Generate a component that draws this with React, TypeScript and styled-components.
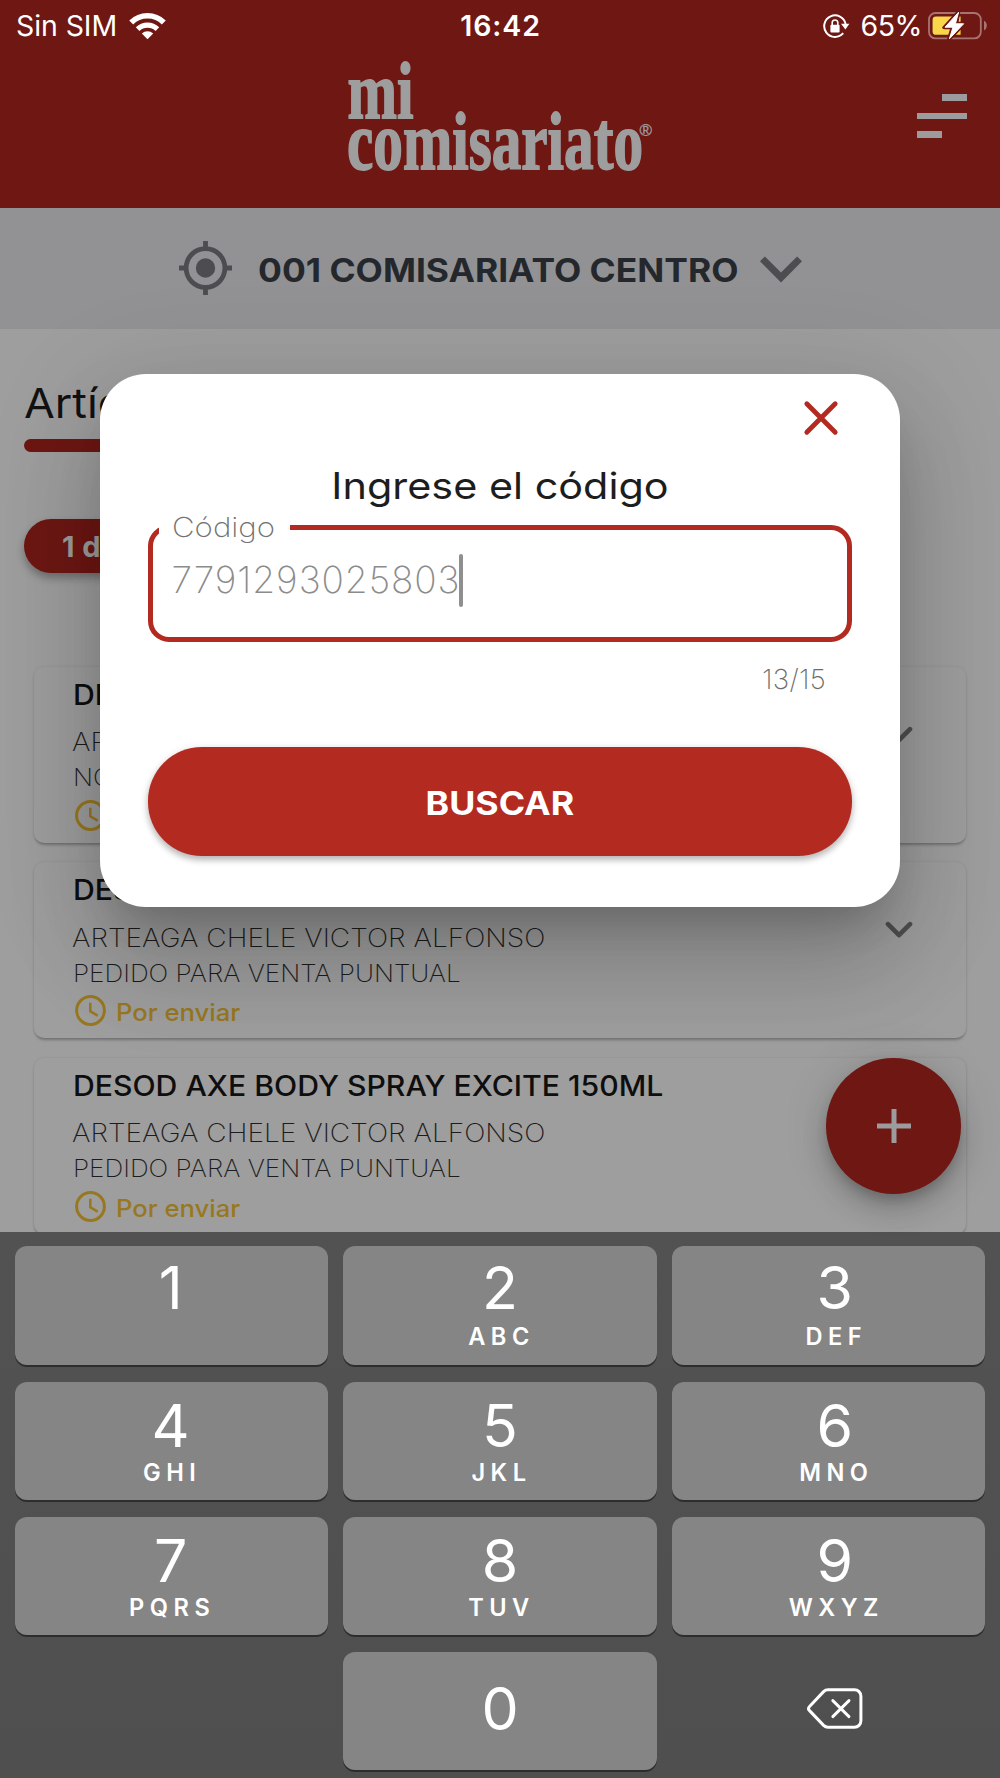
import React from "react";
import styled, { createGlobalStyle, css } from "styled-components";

const color = {
  red: "#b32a21",
  redDim: "#6e1713",
  dimWhite: "#9e9e9e",
  band: "#929294",
  key: "#858585",
};

/* Widens a line of text to the proportions of an extended geometric sans. */
const extended = (ratio: number, origin = "left") => css`
  transform: scaleX(${ratio});
  transform-origin: ${origin} center;
`;

const GlobalStyle = createGlobalStyle`
  *, *::before, *::after { box-sizing: border-box; }
  body {
    margin: 0;
    font-family: Inter, "Liberation Sans", sans-serif;
    -webkit-font-smoothing: antialiased;
  }
`;

const Screen = styled.div`
  position: relative;
  width: 1000px;
  height: 1778px;
  overflow: hidden;
  display: flex;
  flex-direction: column;
  background: ${color.dimWhite};
`;

/* ---------- header ---------- */

const Header = styled.header`
  height: 207.5px;
  flex: none;
  display: flex;
  flex-direction: column;
  background: ${color.redDim};
`;

const StatusBar = styled.div`
  height: 50px;
  padding: 0 12px 0 16px;
  display: grid;
  grid-template-columns: 1fr auto 1fr;
  align-items: center;
  color: #fff;
  font-size: 28.5px;
  line-height: 51px;
`;

const StatusGroup = styled.div<{ $end?: boolean }>`
  display: flex;
  align-items: center;
  justify-content: ${(p) => (p.$end ? "flex-end" : "flex-start")};
`;

const Carrier = styled.span`
  letter-spacing: -0.1px;
  margin-right: 12px;
`;

const Time = styled.span`
  margin-right: 3px;
  font-weight: 600;
  letter-spacing: 0.9px;
`;

const Percent = styled.span`
  letter-spacing: -0.5px;
  margin: 0 6px 0 11px;
`;

const Brand = styled.div`
  flex: 1;
  padding: 0 33px 0 342px;
  display: flex;
  justify-content: space-between;
  align-items: flex-start;
`;

const LogoArt = styled.svg`
  display: block;
  overflow: visible;
`;

const MenuIcon = styled.div`
  width: 50px;
  margin-top: 44px;
  display: flex;
  flex-direction: column;
  gap: 12px;
`;

const MenuBar = styled.span<{ $w: number; $right?: boolean }>`
  width: ${(p) => p.$w}px;
  height: 6.6px;
  align-self: ${(p) => (p.$right ? "flex-end" : "flex-start")};
  background: #9c9c9e;
`;

/* ---------- store selector ---------- */

const StoreBand = styled.div`
  height: 121.5px;
  flex: none;
  padding: 0 198px 0 179px;
  display: flex;
  align-items: center;
  background: ${color.band};
`;

const StoreName = styled.span`
  flex: 1;
  margin: 3px 0 0 26px;
  font-size: 32.6px;
  font-weight: 700;
  line-height: 40px;
  white-space: nowrap;
  color: #24282c;
  ${extended(1.087)}
`;

const StoreChevronSlot = styled.div`
  display: flex;
  padding-top: 2px;
`;

/* ---------- dimmed page ---------- */

const Page = styled.main`
  flex: 1;
  min-height: 0;
  overflow: hidden;
  padding: 49px 34px 0 24px;
  display: flex;
  flex-direction: column;

  > * {
    flex: none;
  }
`;

const PageTitle = styled.h1`
  margin: 0;
  width: max-content;
  font-size: 41px;
  font-weight: 430;
  line-height: 51px;
  color: #121212;
  ${extended(1.09)}
`;

const TitleRule = styled.div`
  width: 230px;
  height: 12.5px;
  margin-top: 10.3px;
  border-radius: 7px;
  background: ${color.redDim};
`;

const CountPill = styled.div`
  width: 190px;
  height: 53.5px;
  margin-top: 67.4px;
  padding-left: 38px;
  border-radius: 27px;
  background: ${color.redDim};
  box-shadow: 0 5px 8px rgba(0, 0, 0, 0.3);
  color: ${color.dimWhite};
  font-size: 29px;
  font-weight: 700;
  letter-spacing: 0.4px;
  line-height: 56px;
`;

const List = styled.div`
  margin: 94px 0 0 10px;
  display: flex;
  flex-direction: column;
  gap: 19.6px;
`;

const Card = styled.article`
  height: 176px;
  flex: none;
  padding: 10px 53px 0 40px;
  display: flex;
  justify-content: space-between;
  border-radius: 10px;
  box-shadow: 0 3px 3px -1px rgba(0, 0, 0, 0.26), 0 0 3px rgba(0, 0, 0, 0.1);
`;

const CardText = styled.div`
  display: flex;
  flex-direction: column;
  white-space: nowrap;
`;

const CardTitle = styled.h2`
  margin: 0 0 9.5px -1.5px;
  font-size: 28px;
  font-weight: 470;
  line-height: 37px;
  color: #0e0e0e;
  ${extended(1.078)}
`;

const CardLine = styled.p<{ $small?: boolean }>`
  margin: 0 0 0 ${(p) => (p.$small ? -1 : -1.6)}px;
  font-size: ${(p) => (p.$small ? 24 : 26)}px;
  font-weight: 230;
  line-height: ${(p) => (p.$small ? 35.2 : 37)}px;
  color: #1c1c1c;
  ${(p) => extended(p.$small ? 1.088 : 1.08)}
`;

const Pending = styled.div`
  height: 40px;
  padding-left: 1px;
  display: flex;
  align-items: center;
  gap: 9.6px;
  color: #98781f;
  font-size: 24px;
  font-weight: 480;
`;

const PendingLabel = styled.span`
  padding-top: 3px;
  ${extended(1.067)}
`;

const ChevronSlot = styled.div`
  padding-top: 47px;
`;

const Fab = styled.div`
  position: absolute;
  left: 826px;
  top: 1058px;
  width: 135px;
  height: 135.5px;
  border-radius: 50%;
  display: flex;
  align-items: center;
  justify-content: center;
  background: ${color.redDim};
  box-shadow: 0 8px 13px -3px rgba(0, 0, 0, 0.2), 0 16px 27px 0 rgba(0, 0, 0, 0.14),
    0 3px 48px 0 rgba(0, 0, 0, 0.12);
`;

/* ---------- dialog ---------- */

const Dialog = styled.section`
  position: absolute;
  left: 100px;
  top: 373.5px;
  width: 800px;
  height: 533px;
  padding: 0 48px;
  display: flex;
  flex-direction: column;
  border-radius: 46px;
  background: #fff;
  box-shadow: 0 29px 40px -19px rgba(0, 0, 0, 0.2), 0 60px 92px 6px rgba(0, 0, 0, 0.13),
    0 22px 110px 16px rgba(0, 0, 0, 0.11);
`;

const CloseRow = styled.div`
  padding: 26.5px 12.7px 0 0;
  display: flex;
  justify-content: flex-end;
`;

const DialogTitle = styled.h2`
  margin: 25px 0 0;
  font-size: 37px;
  font-weight: 430;
  line-height: 50px;
  text-align: center;
  color: #1d1d1d;
  ${extended(1.118, "center")}
`;

const Field = styled.fieldset`
  height: 131px;
  min-width: 0;
  margin: 0;
  padding: 0 0 0 18px;
  border: 5.4px solid ${color.red};
  border-radius: 21px;
`;

const Legend = styled.legend`
  height: 32px;
  margin-left: -12px;
  width: 131px;
  padding: 0 0 0 13px;
  font-size: 27.6px;
  font-weight: 250;
  line-height: 33px;
  color: #727272;
`;

const LegendText = styled.span`
  display: inline-block;
  ${extended(1.13)}
`;

const Value = styled.div`
  display: flex;
  align-items: center;
  height: 54px;
  margin-top: 10px;
  padding-left: 0.6px;
  font-size: 37px;
  font-weight: 190;
  letter-spacing: 0.95px;
  line-height: 48px;
  color: #8c8c8c;
`;

const Caret = styled.span`
  width: 4.6px;
  height: 53px;
  margin-left: -2px;
  border-radius: 2px;
  background: #8f8f8f;
`;

const Counter = styled.div`
  margin-top: 16.5px;
  padding-right: 26px;
  font-size: 27.6px;
  font-weight: 250;
  letter-spacing: 0.3px;
  line-height: 40px;
  text-align: right;
  color: #6d6d6d;
`;

const SearchButton = styled.button`
  height: 109px;
  flex: none;
  margin: 48px 0 0;
  padding: 3px 0 0;
  border: 0;
  border-radius: 54px;
  background: ${color.red};
  box-shadow: 0 4px 6px rgba(0, 0, 0, 0.22), 0 2px 10px rgba(0, 0, 0, 0.12);
  color: #fff;
  font-family: inherit;
  font-size: 32.6px;
  font-weight: 700;
`;

const SearchLabel = styled.span`
  display: inline-block;
  ${extended(1.095, "center")}
`;

/* ---------- keyboard ---------- */

const Keyboard = styled.div`
  height: 546.3px;
  flex: none;
  padding: 14.5px 15px 0;
  display: grid;
  grid-template-columns: repeat(3, 1fr);
  grid-auto-rows: 118.3px;
  gap: 17px 15px;
  align-content: start;
  background: linear-gradient(#525252, #4f4f4f);
`;

const Key = styled.div<{ $plain?: boolean; $center?: boolean; $shift?: number }>`
  display: flex;
  flex-direction: column;
  align-items: center;
  justify-content: ${(p) => (p.$center ? "center" : "flex-start")};
  padding: ${(p) => (p.$center ? 0 : 7)}px 0 ${(p) => (p.$center ? 5 : 0)}px;
  text-indent: 0;
  border-left: ${(p) => Math.max(p.$shift ?? 0, 0)}px solid transparent;
  border-right: ${(p) => Math.max(-(p.$shift ?? 0), 0)}px solid transparent;
  border-radius: 12px;
  background: ${(p) => (p.$plain ? "transparent" : color.key)};
  box-shadow: ${(p) => (p.$plain ? "none" : "0 2px 0 #2d2d2d")};
  color: #fff;
`;

const Digit = styled.span<{ $drop?: number }>`
  padding-top: ${(p) => p.$drop ?? 0}px;
  font-size: 59px;
  font-weight: 380;
  line-height: ${(p) => 70 - (p.$drop ?? 0)}px;
`;

const Letters = styled.span`
  padding-left: 3px;
  font-size: 23.6px;
  font-weight: 600;
  letter-spacing: 5.5px;
  line-height: 28px;
`;

/* ---------- drawings ---------- */

const Wifi = () => (
  <svg width="37" height="28" viewBox="0 0 37 28" fill="none">
    <path d="M2.2 10.4a23.2 23.2 0 0 1 32.6 0" stroke="#fff" strokeWidth="5.6" />
    <path d="M8.6 17.2a14.2 14.2 0 0 1 19.8 0" stroke="#fff" strokeWidth="5.2" />
    <path d="M12.8 21.4a8.4 8.4 0 0 1 11.4 0L18.5 27.2z" fill="#fff" />
  </svg>
);

const RotationLock = () => (
  <svg width="27" height="26" viewBox="0 0 27 26" fill="none">
    <path d="M20.2 20.2A10.8 10.8 0 1 1 22.6 11" stroke="#fff" strokeWidth="2" />
    <path d="M18 10.8h8.4l-4 5.6z" fill="#fff" />
    <rect x="7.4" y="11.8" width="9.2" height="7.6" rx="1" fill="#fff" />
    <path d="M9.2 12V9.8a2.8 2.8 0 0 1 5.6 0V12" stroke="#fff" strokeWidth="1.6" />
  </svg>
);

const Battery = () => (
  <svg width="60" height="30" viewBox="0 0 60 30" fill="none">
    <rect x="1" y="2" width="51.8" height="25.4" rx="6.5" stroke="#a87472" strokeWidth="1.8" />
    <path d="M56 9.8v9.6c3.8-1.6 3.8-8 0-9.6z" fill="#a87472" />
    <path d="M8 5.6h24.6v18.2H8a3.4 3.4 0 0 1-3.4-3.4V9A3.4 3.4 0 0 1 8 5.6z" fill="#f8d84a" />
    <path
      d="M30.6 0.6 16 16.6h8.2L20.6 28.8 36.6 12.4h-8z"
      fill={color.redDim}
      stroke={color.redDim}
      strokeWidth="3.4"
      strokeLinejoin="round"
    />
    <path d="M30.6 1.2 17 16.2h8L21.4 27.8 35.6 12.8h-8.2z" fill="#fff" stroke="#fff" strokeLinejoin="round" />
  </svg>
);

const Logo = () => (
  <LogoArt
    width="320"
    height="130"
    viewBox="342 50 320 130"
    fill="#9e9e9e"
    fontFamily='"Liberation Serif", serif'
    fontWeight="700"
    stroke="#9e9e9e"
    strokeWidth="1.8"
  >
    <text x="347.5" y="117.5" fontSize="80" textLength="66" lengthAdjust="spacingAndGlyphs">
      mi
    </text>
    <text x="347" y="169" fontSize="82" textLength="296" lengthAdjust="spacingAndGlyphs">
      comisariato
    </text>
    <text
      x="639.4"
      y="136.4"
      fontSize="17"
      fontFamily='"Liberation Sans", sans-serif'
      fontWeight="400"
      strokeWidth="0.3"
    >
      ®
    </text>
  </LogoArt>
);

const Target = () => (
  <svg width="53" height="54" viewBox="0 0 53 54" fill="none" stroke="#4b4d50">
    <circle cx="26.5" cy="27" r="19.4" strokeWidth="4.8" />
    <circle cx="26.5" cy="27" r="9.7" fill="#4b4d50" stroke="none" />
    <path d="M26.5 0v7M26.5 47v7M0 27h7M46 27h7" strokeWidth="4.8" />
  </svg>
);

const StoreChevron = () => (
  <svg width="42" height="27" viewBox="0 0 42 27" fill="#4b4d50">
    <path d="M4.9 0.4 21 16.4 37.1 0.4 42 5.3 21 26.4 0 5.3z" />
  </svg>
);

const CardChevron = () => (
  <svg width="28" height="20" viewBox="0 0 28 20" fill="none">
    <path d="M3 5.2 14 16.2 25 5.2" stroke="#4f4f4f" strokeWidth="4.6" strokeLinecap="round" strokeLinejoin="round" />
  </svg>
);

const Clock = () => (
  <svg width="31" height="31" viewBox="0 0 31 31" fill="none" stroke="#98781f">
    <circle cx="15.5" cy="15.5" r="13.9" strokeWidth="3" />
    <path d="M15.3 7.8v8.4l7.4 4.4" strokeWidth="2.5" />
  </svg>
);

const Plus = () => (
  <svg width="34" height="34" viewBox="0 0 34 34" stroke="#9c9c9e" strokeWidth="5">
    <path d="M17 0v34M0 17h34" />
  </svg>
);

const Close = () => (
  <svg width="36" height="36" viewBox="0 0 36 36" stroke={color.red} strokeWidth="4.8" strokeLinecap="round">
    <path d="M3.8 3.8 32.2 32.2M32.2 3.8 3.8 32.2" />
  </svg>
);

const Backspace = () => (
  <svg width="56" height="42" viewBox="0 0 56 42" fill="none" stroke="#fff" strokeLinecap="round" strokeLinejoin="round">
    <path
      d="M21 1.8h26.5a6.4 6.4 0 0 1 6.4 6.4v24.6a6.4 6.4 0 0 1-6.4 6.4H21a6.4 6.4 0 0 1-4.4-1.8L2.3 22.4a2.4 2.4 0 0 1 0-3.6L16.6 3.6A6.4 6.4 0 0 1 21 1.8z"
      strokeWidth="3"
    />
    <path d="M25.8 12.6 42 28.6M42 12.6 25.8 28.6" strokeWidth="2.9" />
  </svg>
);

/* ---------- data ---------- */

const articles = [
  { title: "DESOD", who: "ARTEAGA", note: "NO" },
  { title: "DESOD", who: "ARTEAGA CHELE VICTOR ALFONSO", note: "PEDIDO PARA VENTA PUNTUAL" },
  {
    title: "DESOD AXE BODY SPRAY EXCITE 150ML",
    who: "ARTEAGA CHELE VICTOR ALFONSO",
    note: "PEDIDO PARA VENTA PUNTUAL",
  },
];

const keys: [string, string][] = [
  ["1", ""],
  ["2", "ABC"],
  ["3", "DEF"],
  ["4", "GHI"],
  ["5", "JKL"],
  ["6", "MNO"],
  ["7", "PQRS"],
  ["8", "TUV"],
  ["9", "WXYZ"],
];

/* Horizontal nudge of the legends in each keyboard column. */
const columnShift = [-2, 0, 13];

export default function App() {
  return (
    <Screen>
      <GlobalStyle />
      <Header>
        <StatusBar>
          <StatusGroup>
            <Carrier>Sin SIM</Carrier>
            <Wifi />
          </StatusGroup>
          <Time>16:42</Time>
          <StatusGroup $end>
            <RotationLock />
            <Percent>65%</Percent>
            <Battery />
          </StatusGroup>
        </StatusBar>
        <Brand>
          <Logo />
          <MenuIcon>
            <MenuBar $w={25} $right />
            <MenuBar $w={50} />
            <MenuBar $w={25} />
          </MenuIcon>
        </Brand>
      </Header>

      <StoreBand>
        <Target />
        <StoreName>001 COMISARIATO CENTRO</StoreName>
        <StoreChevronSlot>
          <StoreChevron />
        </StoreChevronSlot>
      </StoreBand>

      <Page>
        <PageTitle>Artículos</PageTitle>
        <TitleRule />
        <CountPill>1 de 1</CountPill>
        <List>
          {articles.map((a, i) => (
            <Card key={i}>
              <CardText>
                <CardTitle>{a.title}</CardTitle>
                <CardLine>{a.who}</CardLine>
                <CardLine $small>{a.note}</CardLine>
                <Pending>
                  <Clock />
                  <PendingLabel>Por enviar</PendingLabel>
                </Pending>
              </CardText>
              <ChevronSlot>
                <CardChevron />
              </ChevronSlot>
            </Card>
          ))}
        </List>
      </Page>

      <Fab>
        <Plus />
      </Fab>

      <Dialog>
        <CloseRow>
          <Close />
        </CloseRow>
        <DialogTitle>Ingrese el código</DialogTitle>
        <Field>
          <Legend>
            <LegendText>Código</LegendText>
          </Legend>
          <Value>
            7791293025803
            <Caret />
          </Value>
        </Field>
        <Counter>13/15</Counter>
        <SearchButton>
          <SearchLabel>BUSCAR</SearchLabel>
        </SearchButton>
      </Dialog>

      <Keyboard>
        {keys.map(([digit, letters], i) => (
          <Key key={digit} $shift={columnShift[i % 3]}>
            <Digit $drop={i > 2 ? 3 : 0}>{digit}</Digit>
            {letters && <Letters>{letters}</Letters>}
          </Key>
        ))}
        <Key $plain />
        <Key $center>
          <Digit>0</Digit>
        </Key>
        <Key $plain $center $shift={13}>
          <Backspace />
        </Key>
      </Keyboard>
    </Screen>
  );
}
